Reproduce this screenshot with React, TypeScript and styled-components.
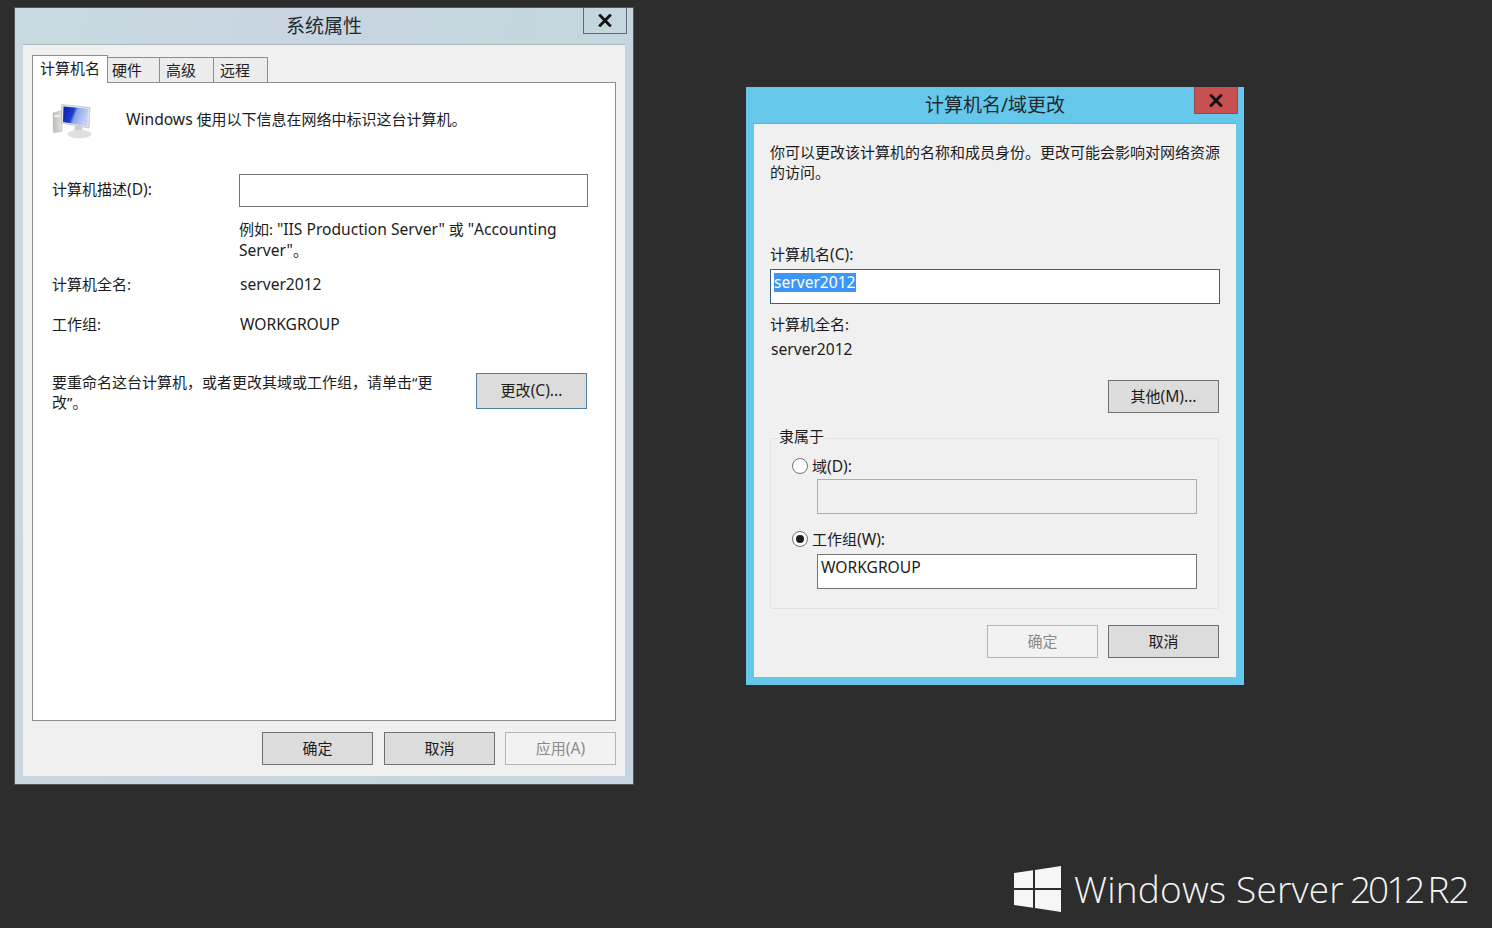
import React from 'react';
import styled, { createGlobalStyle } from 'styled-components';

const GlobalStyle = createGlobalStyle`
  * { box-sizing: border-box; }
  html, body { margin: 0; height: 100%; }
  body {
    background: #2d2d2d;
    color: #1c1c1c;
    font-family: "Noto Sans", "Noto Sans CJK SC", sans-serif;
    font-size: 15px;
    line-height: 20px;
  }
`;

const Desktop = styled.div`
  position: relative;
  width: 1492px;
  height: 928px;
  overflow: hidden;
`;

const Window = styled.section<{ $left: number; $top: number; $width: number; $height: number; $active?: boolean }>`
  position: absolute;
  left: ${(p) => p.$left}px;
  top: ${(p) => p.$top}px;
  width: ${(p) => p.$width}px;
  height: ${(p) => p.$height}px;
  display: flex;
  flex-direction: column;
  padding: 0 8px 8px;
  outline: ${(p) => (p.$active ? 'none' : '1px solid #50565a')};
  background: ${(p) =>
    p.$active ? '#65c8ea' : 'linear-gradient(100deg, #c8dadf 0%, #c8d5e2 40%, #c4d7dc 72%, #c7d5e2 100%)'};
`;

const TitleBar = styled.header`
  height: 37px;
  flex: none;
  display: flex;
  align-items: center;
  justify-content: center;
  font-size: 19px;
  color: #1f2a30;
  padding-bottom: 2px;
`;

const CloseButton = styled.button<{ $active?: boolean }>`
  position: absolute;
  top: 0;
  right: 6px;
  width: 44px;
  height: ${(p) => (p.$active ? 27 : 26)}px;
  display: flex;
  align-items: center;
  justify-content: center;
  padding: 0;
  border: 1px solid ${(p) => (p.$active ? '#8f4a48' : '#5f6c78')};
  border-top: none;
  background: ${(p) => (p.$active ? '#c75050' : 'transparent')};
`;

const ClientArea = styled.div<{ $padding: string }>`
  flex: 1;
  display: flex;
  flex-direction: column;
  padding: ${(p) => p.$padding};
  background: #f0f0f0;
  box-shadow: 0 -1px 0 rgba(120, 130, 135, 0.35);
`;

const TabStrip = styled.div`
  display: flex;
  align-items: flex-end;
  height: 28px;
  margin-bottom: -1px;
  position: relative;
  z-index: 1;
`;

const Tab = styled.div<{ $selected?: boolean; $width: number; $inset: number }>`
  width: ${(p) => p.$width}px;
  height: ${(p) => (p.$selected ? 28 : 26)}px;
  padding: 2px 0 0 ${(p) => p.$inset}px;
  border: 1px solid #8e8e8e;
  border-left-width: ${(p) => (p.$selected ? 1 : 0)}px;
  border-bottom: ${(p) => (p.$selected ? 'none' : '1px solid #8e8e8e')};
  background: ${(p) => (p.$selected ? '#fff' : '#ececec')};
  white-space: nowrap;
`;

const TabPanel = styled.div`
  height: 639px;
  padding: 20px 19px 0;
  border: 1px solid #8e8e8e;
  background: #fff;
`;

const IntroRow = styled.div`
  display: flex;
  align-items: flex-start;
  gap: 34px;
  height: 37px;
`;

const IntroText = styled.p`
  margin: 6px 0 0;
  white-space: nowrap;
`;

const Latin = styled.span`
  font-size: 15.6px;
`;

const FieldGrid = styled.div<{ $top: number }>`
  display: grid;
  grid-template-columns: 187px 349px;
  align-items: start;
  margin-top: ${(p) => p.$top}px;
`;

const GridLabel = styled.span<{ $top?: number }>`
  margin-top: ${(p) => p.$top ?? 0}px;
`;

const Hint = styled.p`
  margin: 12px 0 0 187px;
  line-height: 21px;
  white-space: nowrap;
`;

const Value = styled.span`
  padding-left: 1px;
`;

const TextField = styled.div<{ $disabled?: boolean; $focused?: boolean; $height?: number }>`
  width: 100%;
  height: ${(p) => p.$height ?? 35}px;
  padding: 2px 3px;
  border: 1px solid ${(p) => (p.$focused ? '#3d5f7e' : p.$disabled ? '#aeaeae' : '#757575')};
  background: ${(p) => (p.$disabled ? '#f0f0f0' : '#fff')};
  line-height: 20px;
`;

const Selection = styled.span`
  display: inline-block;
  height: 19px;
  line-height: 19px;
  background: #3c96f5;
  color: #fff;
`;

const RenameRow = styled.div`
  display: flex;
  justify-content: space-between;
  align-items: flex-start;
  margin-top: 38px;
  padding-right: 9px;
`;

const RenameText = styled.p`
  margin: 0;
  white-space: nowrap;
`;

const Button = styled.button<{ $tone?: 'default' | 'disabled' | 'focus'; $height?: number }>`
  width: 111px;
  height: ${(p) => p.$height ?? 33}px;
  padding: 0 0 2px;
  font: inherit;
  color: ${(p) => (p.$tone === 'disabled' ? '#8b8b8b' : '#1c1c1c')};
  background: ${(p) => (p.$tone === 'disabled' ? '#f2f2f2' : '#dcdcdc')};
  border: 1px solid ${(p) => (p.$tone === 'disabled' ? '#b4b4b4' : p.$tone === 'focus' ? '#4f7fa3' : '#707070')};
`;

const ChangeButton = styled(Button)`
  margin-top: 1px;
`;

const WideGapButton = styled(Button)`
  margin-right: 1px;
`;

const ButtonRow = styled.div<{ $top: number; $inset?: number }>`
  display: flex;
  justify-content: flex-end;
  gap: 10px;
  margin-top: ${(p) => p.$top}px;
  padding-right: ${(p) => p.$inset ?? 0}px;
`;

const Paragraph = styled.p`
  margin: 0;
  white-space: nowrap;
`;

const FieldLabel = styled.div<{ $top: number; $nudge?: number }>`
  margin-top: ${(p) => p.$top}px;
  padding-left: ${(p) => p.$nudge ?? 0}px;
  height: 20px;
`;

const NameField = styled.div`
  margin-top: 5px;
`;

const GroupBox = styled.fieldset`
  width: 449px;
  height: 181px;
  margin: 15px 0 0;
  padding: 8px 21px 0 21px;
  min-width: 0;
  border: 1px solid #e2e2e2;
  border-radius: 2px;
`;

const GroupTitle = styled.legend`
  margin-left: -14px;
  padding: 0 1px;
  line-height: 20px;
  transform: translateY(-2px);
`;

const RadioRow = styled.label<{ $top?: number }>`
  display: flex;
  align-items: center;
  gap: 4px;
  height: 20px;
  margin-top: ${(p) => p.$top ?? 0}px;
`;

const RadioDot = styled.span<{ $checked?: boolean }>`
  width: 16px;
  height: 16px;
  flex: none;
  display: flex;
  align-items: center;
  justify-content: center;
  border: 1px solid #707070;
  border-radius: 50%;
  background: #fff;

  &::after {
    content: '';
    width: 8px;
    height: 8px;
    border-radius: 50%;
    background: ${(p) => (p.$checked ? '#1c1c1c' : 'transparent')};
  }
`;

const IndentedField = styled.div<{ $top: number }>`
  margin: ${(p) => p.$top}px 0 0 25px;
`;

const Branding = styled.div`
  position: absolute;
  left: 1014px;
  top: 866px;
  display: flex;
  align-items: center;
  gap: 13px;
  color: #f4f4f4;
  font-family: "Open Sans", sans-serif;
  font-weight: 300;
  font-size: 37px;
  line-height: 46px;
  white-space: nowrap;
`;

const BrandName = styled.span`
  letter-spacing: 0.2px;
`;

const BrandDigits = styled.span`
  margin-left: 6px;
  letter-spacing: -3px;
`;

const BrandRelease = styled.span`
  margin-left: 5px;
  letter-spacing: -1px;
`;

const WinLogo = () => (
  <svg width="47" height="46" viewBox="0 0 47 46" aria-hidden="true">
    <path fill="#f6f6f6" d="M0 7 19 4.2V22H0zM21 3.9 47 0V22H21zM0 24H19V41.8L0 39zM21 24H47V46L21 42.1z" />
  </svg>
);

const ComputerIcon = () => (
  <svg width="40" height="37" viewBox="0 0 40 37" aria-hidden="true">
    <defs>
      <linearGradient id="screen" x1="0" y1="0" x2="1" y2="0.3">
        <stop offset="0" stopColor="#0b1eb0" />
        <stop offset="0.45" stopColor="#1b3cc8" />
        <stop offset="0.58" stopColor="#8ea4ea" />
        <stop offset="1" stopColor="#c3cff3" />
      </linearGradient>
      <linearGradient id="tower" x1="0" y1="0" x2="1" y2="0">
        <stop offset="0" stopColor="#b9bcb4" />
        <stop offset="1" stopColor="#e2e4dd" />
      </linearGradient>
    </defs>
    <path fill="url(#tower)" stroke="#a9aca6" strokeWidth="0.5" d="M1 10 10 7.5V28.5L1.5 29.5z" />
    <rect x="2.5" y="12" width="5" height="2" fill="#f2f3ee" />
    <path fill="#dfe3e6" stroke="#aab1b7" strokeWidth="0.6" d="M9.5 1.5 38 4.5 37 25 9.5 20z" />
    <path fill="url(#screen)" d="M11.5 3.5 36 5.8 35 23 11 19z" />
    <path fill="#c8cccc" d="M23 22.5h6.5l1.5 7h-9z" />
    <ellipse cx="27.5" cy="31" rx="12" ry="4.2" fill="#dde0e0" />
  </svg>
);

const CloseGlyph = () => (
  <svg width="14" height="13" viewBox="0 0 14 13" aria-hidden="true">
    <path stroke="#111" strokeWidth="2.9" d="M1.2 0.6 12.8 12.4M12.8 0.6 1.2 12.4" />
  </svg>
);

const App: React.FC = () => (
  <Desktop lang="zh-CN">
    <GlobalStyle />

    <Window $left={15} $top={8} $width={618} $height={776}>
      <TitleBar>系统属性</TitleBar>
      <CloseButton aria-label="关闭">
        <CloseGlyph />
      </CloseButton>
      <ClientArea $padding="10px 9px 0">
        <TabStrip>
          <Tab $selected $width={76} $inset={7}>计算机名</Tab>
          <Tab $width={52} $inset={4}>硬件</Tab>
          <Tab $width={54} $inset={6}>高级</Tab>
          <Tab $width={54} $inset={6}>远程</Tab>
        </TabStrip>
        <TabPanel>
          <IntroRow>
            <ComputerIcon />
            <IntroText><Latin>Windows</Latin> 使用以下信息在网络中标识这台计算机。</IntroText>
          </IntroRow>
          <FieldGrid $top={34}>
            <GridLabel $top={5}>计算机描述<Latin>(D):</Latin></GridLabel>
            <TextField $height={33} />
          </FieldGrid>
          <Hint>
            例如: <Latin>"IIS Production Server"</Latin> 或 <Latin>"Accounting</Latin>
            <br />
            <Latin>Server"</Latin>。
          </Hint>
          <FieldGrid $top={13}>
            <GridLabel>计算机全名:</GridLabel>
            <Value><Latin>server2012</Latin></Value>
          </FieldGrid>
          <FieldGrid $top={20}>
            <GridLabel>工作组:</GridLabel>
            <Value><Latin>WORKGROUP</Latin></Value>
          </FieldGrid>
          <RenameRow>
            <RenameText>
              要重命名这台计算机，或者更改其域或工作组，请单击“更
              <br />
              改”。
            </RenameText>
            <ChangeButton $tone="focus" $height={36}>更改<Latin>(C)...</Latin></ChangeButton>
          </RenameRow>
        </TabPanel>
        <ButtonRow $top={11}>
          <WideGapButton>确定</WideGapButton>
          <Button>取消</Button>
          <Button $tone="disabled">应用<Latin>(A)</Latin></Button>
        </ButtonRow>
      </ClientArea>
    </Window>

    <Window $left={746} $top={87} $width={498} $height={598} $active>
      <TitleBar>计算机名/域更改</TitleBar>
      <CloseButton $active aria-label="关闭">
        <CloseGlyph />
      </CloseButton>
      <ClientArea $padding="18px 16px 0">
        <Paragraph>
          你可以更改该计算机的名称和成员身份。更改可能会影响对网络资源
          <br />
          的访问。
        </Paragraph>
        <FieldLabel $top={62}>计算机名<Latin>(C):</Latin></FieldLabel>
        <NameField>
          <TextField $focused>
            <Selection><Latin>server2012</Latin></Selection>
          </TextField>
        </NameField>
        <FieldLabel $top={10}>计算机全名:</FieldLabel>
        <FieldLabel $top={5} $nudge={1}><Latin>server2012</Latin></FieldLabel>
        <ButtonRow $top={21} $inset={1}>
          <Button>其他<Latin>(M)...</Latin></Button>
        </ButtonRow>
        <GroupBox>
          <GroupTitle>隶属于</GroupTitle>
          <RadioRow>
            <RadioDot />
            <span>域<Latin>(D):</Latin></span>
          </RadioRow>
          <IndentedField $top={3}>
            <TextField $disabled />
          </IndentedField>
          <RadioRow $top={15}>
            <RadioDot $checked />
            <span>工作组<Latin>(W):</Latin></span>
          </RadioRow>
          <IndentedField $top={5}>
            <TextField><Latin>WORKGROUP</Latin></TextField>
          </IndentedField>
        </GroupBox>
        <ButtonRow $top={16} $inset={1}>
          <Button $tone="disabled">确定</Button>
          <Button>取消</Button>
        </ButtonRow>
      </ClientArea>
    </Window>

    <Branding>
      <WinLogo />
      <span>
        <BrandName>Windows Server</BrandName>
        <BrandDigits>2012</BrandDigits>
        <BrandRelease>R2</BrandRelease>
      </span>
    </Branding>
  </Desktop>
);

export default App;
